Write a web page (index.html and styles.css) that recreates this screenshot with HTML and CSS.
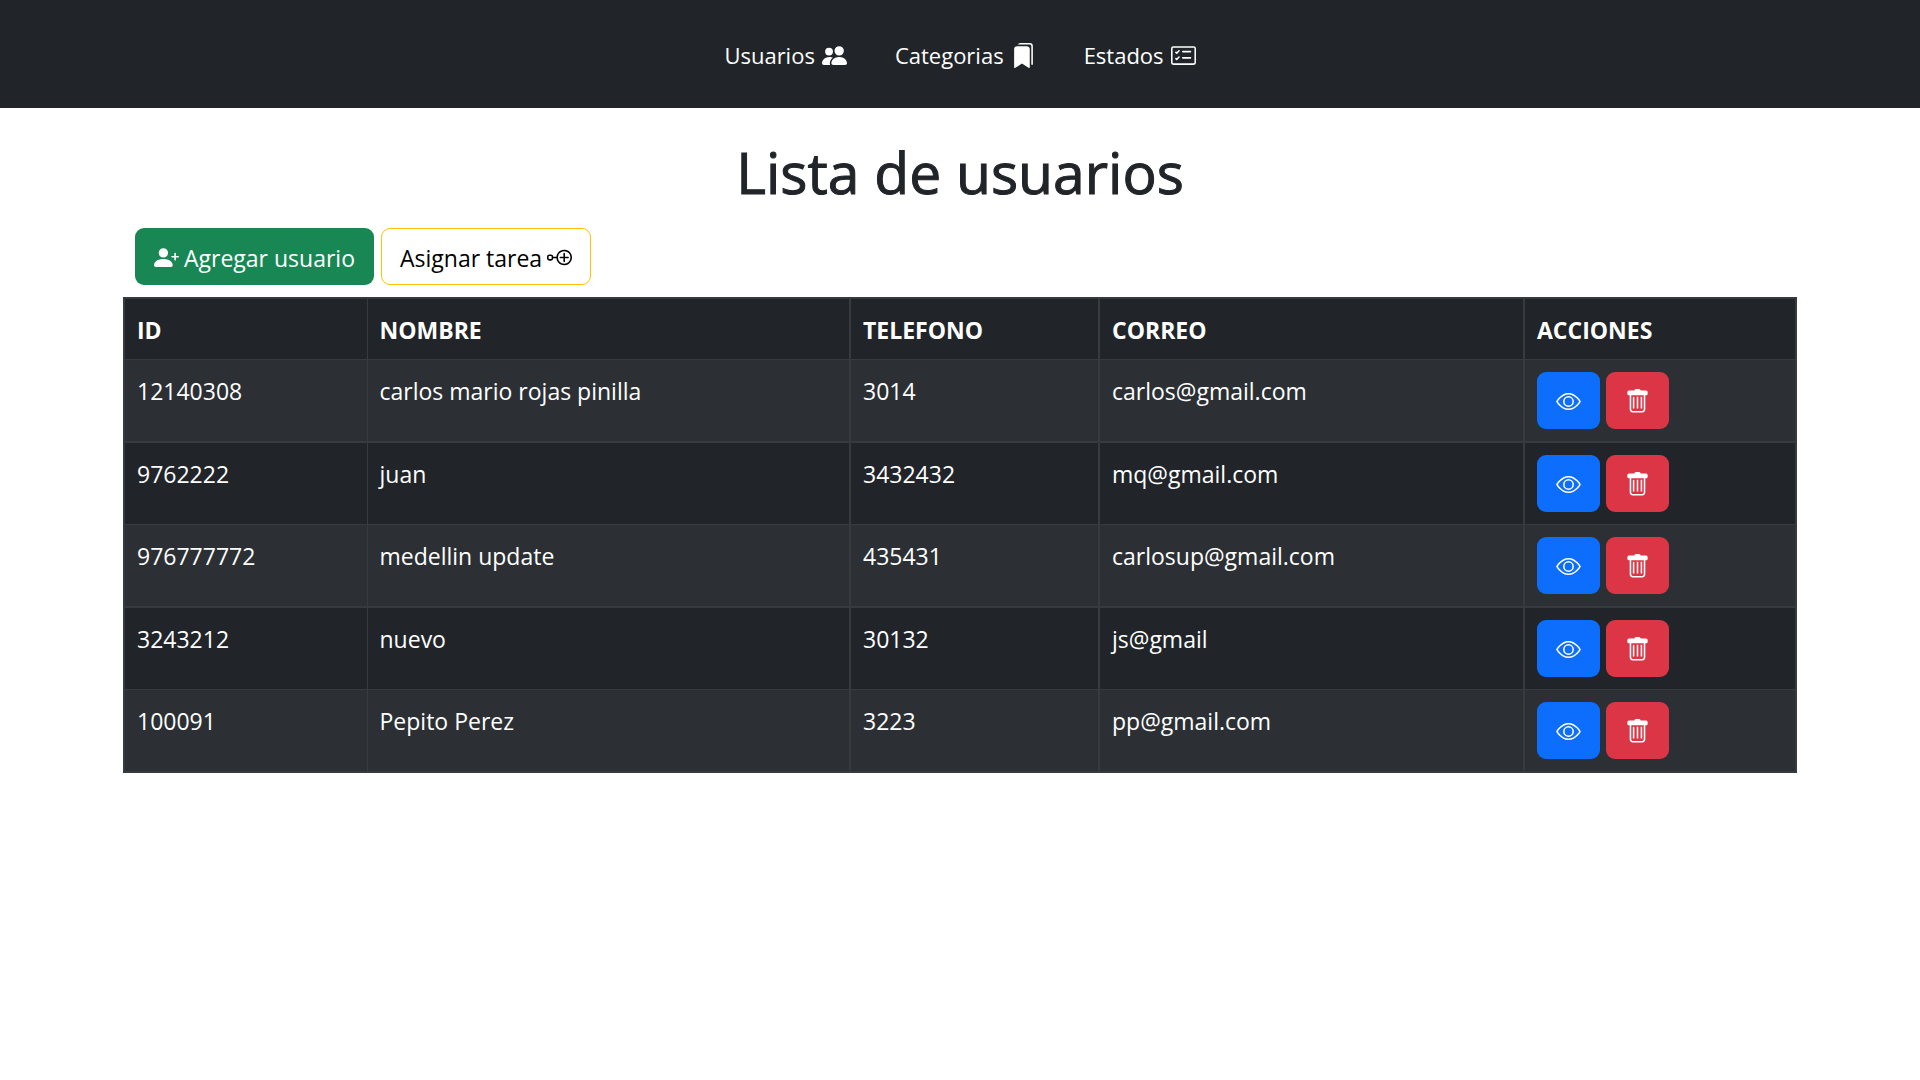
FILE: index.html
```html
<!DOCTYPE html>
<html lang="es">
<head>
<meta charset="utf-8">
<meta name="viewport" content="width=device-width, initial-scale=1">
<title>Lista de usuarios</title>
<link rel="stylesheet" href="styles.css">
</head>
<body>
<svg class="sprite" aria-hidden="true">
  <symbol id="people" viewBox="0 0 16 16"><path d="M7 14s-1 0-1-1 1-4 5-4 5 3 5 4-1 1-1 1H7zm4-6a3 3 0 1 0 0-6 3 3 0 0 0 0 6z"/><path d="M5.216 14A2.238 2.238 0 0 1 5 13c0-1.355.68-2.75 1.936-3.72A6.325 6.325 0 0 0 5 9c-4 0-5 3-5 4s1 1 1 1h4.216zM4.5 8a2.5 2.5 0 1 0 0-5 2.5 2.5 0 0 0 0 5z"/></symbol>
  <symbol id="bookmarks" viewBox="0 0 16 16"><path d="M2 4a2 2 0 0 1 2-2h6a2 2 0 0 1 2 2v11.5a.5.5 0 0 1-.777.416L7 13.101l-4.223 2.815A.5.5 0 0 1 2 15.5V4z"/><path d="M4.268 1A2 2 0 0 1 6 0h6a2 2 0 0 1 2 2v11.5a.5.5 0 0 1-.777.416L13 13.768V2a1 1 0 0 0-1-1H4.268z"/></symbol>
  <symbol id="checklist" viewBox="0 0 16 16"><path d="M14.5 3a.5.5 0 0 1 .5.5v9a.5.5 0 0 1-.5.5h-13a.5.5 0 0 1-.5-.5v-9a.5.5 0 0 1 .5-.5h13zm-13-1A1.5 1.5 0 0 0 0 3.5v9A1.5 1.5 0 0 0 1.5 14h13a1.5 1.5 0 0 0 1.5-1.5v-9A1.5 1.5 0 0 0 14.5 2h-13z"/><path d="M7 5.5a.5.5 0 0 1 .5-.5h5a.5.5 0 0 1 0 1h-5a.5.5 0 0 1-.5-.5zm-1.496-.854a.5.5 0 0 1 0 .708l-1.5 1.5a.5.5 0 0 1-.708 0l-.5-.5a.5.5 0 1 1 .708-.708l.146.147 1.146-1.147a.5.5 0 0 1 .708 0zM7 9.5a.5.5 0 0 1 .5-.5h5a.5.5 0 0 1 0 1h-5a.5.5 0 0 1-.5-.5zm-1.496-.854a.5.5 0 0 1 0 .708l-1.5 1.5a.5.5 0 0 1-.708 0l-.5-.5a.5.5 0 0 1 .708-.708l.146.147 1.146-1.147a.5.5 0 0 1 .708 0z"/></symbol>
  <symbol id="person-plus" viewBox="0 0 16 16"><path d="M1 14s-1 0-1-1 1-4 6-4 6 3 6 4-1 1-1 1H1zm5-6a3 3 0 1 0 0-6 3 3 0 0 0 0 6z"/><path d="M13.5 5a.5.5 0 0 1 .5.5V7h1.5a.5.5 0 0 1 0 1H14v1.5a.5.5 0 0 1-1 0V8h-1.5a.5.5 0 0 1 0-1H13V5.5a.5.5 0 0 1 .5-.5z"/></symbol>
  <symbol id="node-plus" viewBox="0 0 16 16"><path fill-rule="evenodd" d="M11 4a4 4 0 1 0 0 8 4 4 0 0 0 0-8zM6.025 7.5a5 5 0 1 1 0 1H4A1.5 1.5 0 0 1 2.5 10h-1A1.5 1.5 0 0 1 0 8.5v-1A1.5 1.5 0 0 1 1.5 6h1A1.5 1.5 0 0 1 4 7.5h2.025zM11 5a.5.5 0 0 1 .5.5v2h2a.5.5 0 0 1 0 1h-2v2a.5.5 0 0 1-1 0v-2h-2a.5.5 0 0 1 0-1h2v-2A.5.5 0 0 1 11 5zM1.5 7a.5.5 0 0 0-.5.5v1a.5.5 0 0 0 .5.5h1a.5.5 0 0 0 .5-.5v-1a.5.5 0 0 0-.5-.5h-1z"/></symbol>
  <symbol id="eye" viewBox="0 0 16 16"><path d="M16 8s-3-5.500-8-5.500S0 8 0 8s3 5.500 8 5.500S16 8 16 8zM1.173 8a13.133 13.133 0 0 1 1.660-2.043C4.120 4.668 5.880 3.500 8 3.500c2.120 0 3.879 1.168 5.168 2.457A13.133 13.133 0 0 1 14.828 8c-.058.087-.122.183-.195.288-.335.480-.830 1.120-1.465 1.755C11.879 11.332 10.119 12.500 8 12.500c-2.120 0-3.879-1.168-5.168-2.457A13.134 13.134 0 0 1 1.172 8z"/><path d="M8 5.500a2.500 2.500 0 1 0 0 5 2.500 2.500 0 0 0 0-5zM4.500 8a3.500 3.500 0 1 1 7 0 3.500 3.500 0 0 1-7 0z"/></symbol>
  <symbol id="trash" viewBox="0 0 16 16"><path d="M5.500 5A.5.5 0 0 1 6 5.500V12.500H5V5.500A.5.5 0 0 1 5.500 5zM7.500 5h1v7.500h-1zM10 5h1v7.500h-1z"/><path fill-rule="evenodd" d="M14.500 3a1 1 0 0 1-1 1H13v9a2 2 0 0 1-2 2H5a2 2 0 0 1-2-2V4h-.5a1 1 0 0 1-1-1V2a1 1 0 0 1 1-1H6a1 1 0 0 1 1-1h2a1 1 0 0 1 1 1h3.500a1 1 0 0 1 1 1v1zM4 4v9a1 1 0 0 0 1 1h6a1 1 0 0 0 1-1V4z"/></symbol>
</svg>

<header class="topbar">
  <nav class="nav">
    <a class="nav-link" href="#usuarios">Usuarios <svg class="icon"><use href="#people"/></svg></a>
    <a class="nav-link" href="#categorias">Categorias <svg class="icon"><use href="#bookmarks"/></svg></a>
    <a class="nav-link" href="#estados">Estados <svg class="icon"><use href="#checklist"/></svg></a>
  </nav>
</header>

<main class="container">
  <h1 class="title">Lista de usuarios</h1>
  <div class="toolbar">
    <button type="button" class="btn btn-success"><svg class="icon"><use href="#person-plus"/></svg> Agregar usuario</button>
    <button type="button" class="btn btn-outline">Asignar tarea <svg class="icon"><use href="#node-plus"/></svg></button>
  </div>
  <table class="table">
    <colgroup><col class="col-id"><col class="col-name"><col class="col-phone"><col class="col-mail"><col class="col-actions"></colgroup>
    <thead>
      <tr><th scope="col">ID</th><th scope="col">NOMBRE</th><th scope="col">TELEFONO</th><th scope="col">CORREO</th><th scope="col">ACCIONES</th></tr>
    </thead>
    <tbody>
      <tr><td>12140308</td><td>carlos mario rojas pinilla</td><td>3014</td><td>carlos@gmail.com</td>
        <td><div class="actions"><button type="button" class="btn btn-primary" aria-label="Ver"><svg class="icon"><use href="#eye"/></svg></button><button type="button" class="btn btn-danger" aria-label="Eliminar"><svg class="icon"><use href="#trash"/></svg></button></div></td></tr>
      <tr><td>9762222</td><td>juan</td><td>3432432</td><td>mq@gmail.com</td>
        <td><div class="actions"><button type="button" class="btn btn-primary" aria-label="Ver"><svg class="icon"><use href="#eye"/></svg></button><button type="button" class="btn btn-danger" aria-label="Eliminar"><svg class="icon"><use href="#trash"/></svg></button></div></td></tr>
      <tr><td>976777772</td><td>medellin update</td><td>435431</td><td>carlosup@gmail.com</td>
        <td><div class="actions"><button type="button" class="btn btn-primary" aria-label="Ver"><svg class="icon"><use href="#eye"/></svg></button><button type="button" class="btn btn-danger" aria-label="Eliminar"><svg class="icon"><use href="#trash"/></svg></button></div></td></tr>
      <tr><td>3243212</td><td>nuevo</td><td>30132</td><td>js@gmail</td>
        <td><div class="actions"><button type="button" class="btn btn-primary" aria-label="Ver"><svg class="icon"><use href="#eye"/></svg></button><button type="button" class="btn btn-danger" aria-label="Eliminar"><svg class="icon"><use href="#trash"/></svg></button></div></td></tr>
      <tr><td>100091</td><td>Pepito Perez</td><td>3223</td><td>pp@gmail.com</td>
        <td><div class="actions"><button type="button" class="btn btn-primary" aria-label="Ver"><svg class="icon"><use href="#eye"/></svg></button><button type="button" class="btn btn-danger" aria-label="Eliminar"><svg class="icon"><use href="#trash"/></svg></button></div></td></tr>
    </tbody>
  </table>
</main>
</body>
</html>
```
FILE: styles.css
```css
*, *::before, *::after { box-sizing: border-box; }

body {
  margin: 0;
  background: #fff;
  color: #212529;
  font-family: "Open Sans", "Noto Sans", sans-serif;
  font-size: 23px;
  line-height: 38px;
}

.sprite { display: none; }

.icon {
  width: 25px;
  height: 25px;
  flex: none;
  fill: currentColor;
}

.topbar {
  padding: 30px 24px 28px;
  background: #212529;
}

.nav {
  display: flex;
  justify-content: center;
}

.nav-link {
  display: flex;
  align-items: center;
  gap: 7px;
  padding: 6px 24px;
  color: #fff;
  font-size: 22px;
  text-decoration: none;
}

.container {
  max-width: 1710px;
  margin: 0 auto;
  padding: 0 18px;
}

.title {
  margin: 0;
  padding: 28px 0 20px;
  font-size: 57px;
  font-weight: 500;
  line-height: 72px;
  text-align: center;
  -webkit-text-stroke: 1px currentColor;
}

.toolbar {
  display: flex;
  gap: 7px;
  padding: 0 12px 12px;
}

.btn {
  display: flex;
  align-items: center;
  justify-content: center;
  gap: 5px;
  height: 57px;
  padding: 2px 18px 0;
  border: 1px solid transparent;
  border-radius: 9px;
  font: inherit;
  cursor: pointer;
}

.btn-success { background: #198754; color: #fff; }
.btn-outline { border-color: #ffc107; background: #fff; color: #000; }
.btn-primary { background: #0d6efd; color: #fff; }
.btn-danger { background: #dc3545; color: #fff; }

.table {
  width: 100%;
  table-layout: fixed;
  border: 2px solid #373b3e;
  border-collapse: collapse;
  background: #212529;
  color: #fff;
}

.col-id { width: 243px; }
.col-name { width: 29%; }
.col-phone { width: 249px; }
.col-mail { width: 425px; }
.col-actions { width: 272px; }

.table th,
.table td {
  padding: 12px;
  border: 1px solid #373b3e;
  text-align: left;
  vertical-align: top;
}

.table th { padding-bottom: 10px; }

.table th:nth-child(n+3),
.table td:nth-child(n+3) { border-left-width: 2px; }

.table tbody tr:nth-child(odd) { background: #2c3034; }
.table tbody tr:nth-child(odd) td { border-bottom-width: 2px; }

.actions { display: flex; gap: 6px; }
.actions .btn { width: 63px; }
```
